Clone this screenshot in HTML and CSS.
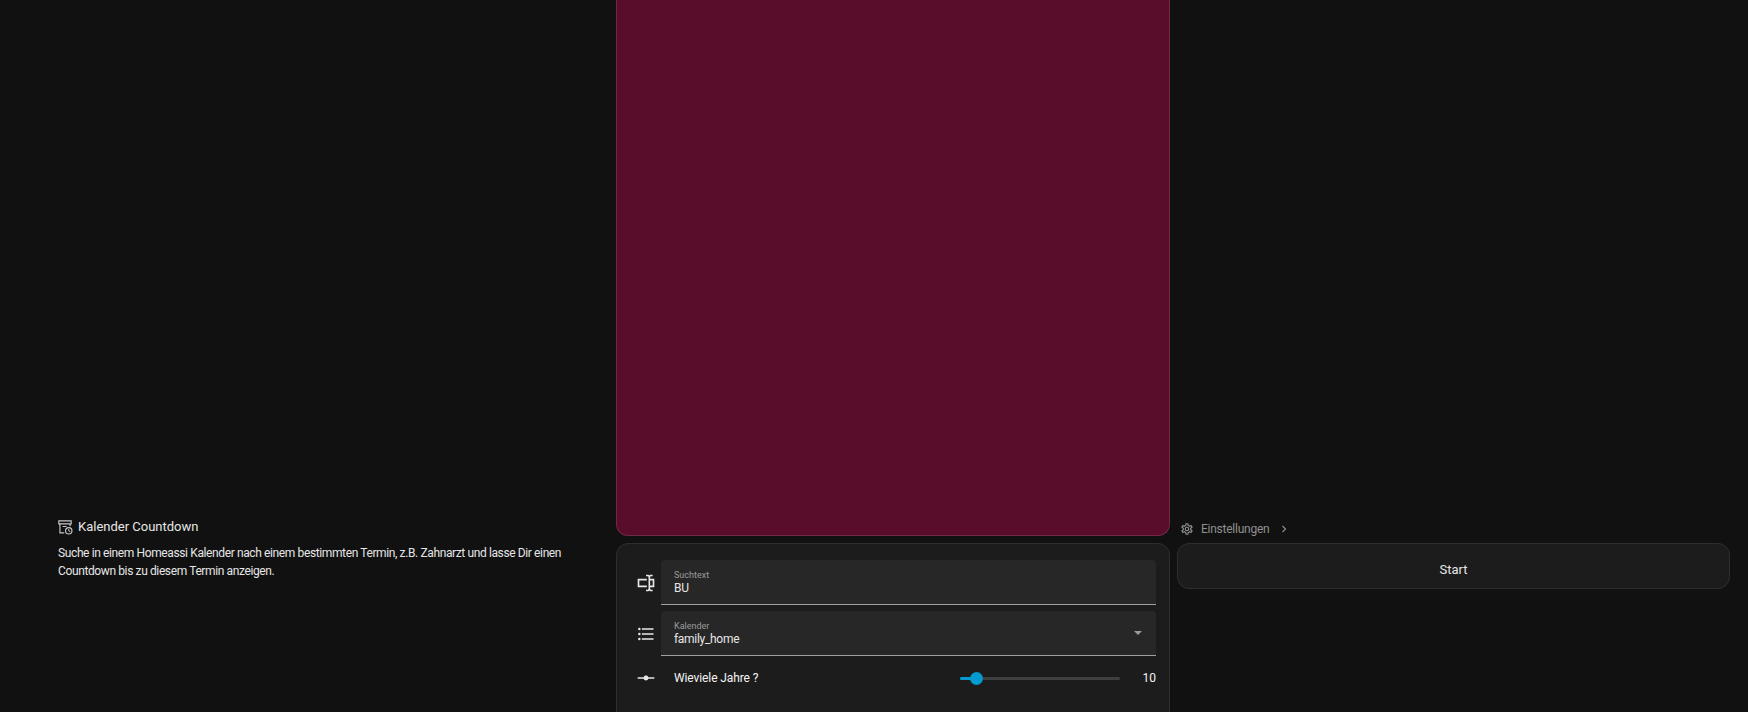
FILE: index.html
```html
<!DOCTYPE html>
<html lang="de">
<head>
    <meta charset="UTF-8">
    <meta name="viewport" content="width=device-width, initial-scale=1.0">
    <title>Kalender Countdown</title>
    <link rel="stylesheet" href="styles.css">
</head>
<body>
    <div class="page">
        <!-- Beschreibung -->
        <div class="info">
            <div class="info-title">
                <svg class="info-icon" viewBox="0 0 24 24"><path d="M3 3H21V8.5H19.5V11H18V8.5H6V19H11V20.5H4.5V8.5H3V3M4.5 4.5V7H19.5V4.5H4.5M9 10.5H14V12H9V10.5Z"/><path d="M17 12A5 5 0 1 1 17 22A5 5 0 0 1 17 12M17 13.5A3.5 3.5 0 1 0 17 20.5A3.5 3.5 0 0 0 17 13.5M16.4 14.5H17.6V16.6L19.3 17.6L18.7 18.6L16.4 17.3V14.5Z"/></svg>
                <span>Kalender Countdown</span>
            </div>
            <p class="info-text">Suche in einem Homeassi Kalender nach einem bestimmten Termin, z.B. Zahnarzt und lasse Dir einen Countdown bis zu diesem Termin anzeigen.</p>
        </div>

        <!-- Vorschau und Formular -->
        <div class="main">
            <div class="preview"></div>
            <div class="card form">
                <div class="form-row">
                    <svg class="row-icon" viewBox="0 0 24 24"><path d="M17,7H22V17H17V19A1,1 0 0,0 18,20H20V22H17.5C16.95,22 16,21.55 16,21C16,21.55 15.05,22 14.5,22H12V20H14A1,1 0 0,0 15,19V5A1,1 0 0,0 14,4H12V2H14.5C15.05,2 16,2.45 16,3C16,2.45 16.95,2 17.5,2H20V4H18A1,1 0 0,0 17,5V7M2,7H13V9H4V15H13V17H2V7M20,15V9H17V15H20Z"/></svg>
                    <div class="field">
                        <span class="field-label">Suchtext</span>
                        <span class="field-value">BU</span>
                    </div>
                </div>
                <div class="form-row">
                    <svg class="row-icon" viewBox="0 0 24 24"><path d="M7,5H21V7H7V5M7,13V11H21V13H7M4,4.5A1.5,1.5 0 0,1 5.5,6A1.5,1.5 0 0,1 4,7.5A1.5,1.5 0 0,1 2.5,6A1.5,1.5 0 0,1 4,4.5M4,10.5A1.5,1.5 0 0,1 5.5,12A1.5,1.5 0 0,1 4,13.5A1.5,1.5 0 0,1 2.5,12A1.5,1.5 0 0,1 4,10.5M7,19V17H21V19H7M4,16.5A1.5,1.5 0 0,1 5.5,18A1.5,1.5 0 0,1 4,19.5A1.5,1.5 0 0,1 2.5,18A1.5,1.5 0 0,1 4,16.5Z"/></svg>
                    <div class="field select">
                        <span class="field-label">Kalender</span>
                        <span class="field-value">family_home</span>
                        <span class="arrow"></span>
                    </div>
                </div>
                <div class="form-row slider-row">
                    <svg class="row-icon" viewBox="0 0 24 24"><path d="M2,11H9.17C9.58,9.83 10.69,9 12,9C13.31,9 14.42,9.83 14.83,11H22V13H14.83C14.42,14.17 13.31,15 12,15C10.69,15 9.58,14.17 9.17,13H2V11Z"/></svg>
                    <span class="slider-label">Wieviele Jahre ?</span>
                    <div class="slider">
                        <div class="slider-fill"></div>
                        <div class="slider-thumb"></div>
                    </div>
                    <span class="slider-value">10</span>
                </div>
            </div>
        </div>

        <!-- Einstellungen und Start -->
        <div class="side">
            <div class="settings">
                <svg class="settings-icon" viewBox="0 0 24 24"><path d="M12,8A4,4 0 0,1 16,12A4,4 0 0,1 12,16A4,4 0 0,1 8,12A4,4 0 0,1 12,8M12,10A2,2 0 0,0 10,12A2,2 0 0,0 12,14A2,2 0 0,0 14,12A2,2 0 0,0 12,10M10,22C9.75,22 9.54,21.82 9.5,21.58L9.13,18.93C8.5,18.68 7.96,18.34 7.44,17.94L4.95,18.95C4.73,19.03 4.46,18.95 4.34,18.73L2.34,15.27C2.21,15.05 2.27,14.78 2.46,14.63L4.57,12.97L4.5,12L4.57,11L2.46,9.37C2.27,9.22 2.21,8.95 2.34,8.73L4.34,5.27C4.46,5.05 4.73,4.96 4.95,5.05L7.44,6.05C7.96,5.66 8.5,5.32 9.13,5.07L9.5,2.42C9.54,2.18 9.75,2 10,2H14C14.25,2 14.46,2.18 14.5,2.42L14.87,5.07C15.5,5.32 16.04,5.66 16.56,6.05L19.05,5.05C19.27,4.96 19.54,5.05 19.66,5.27L21.66,8.73C21.79,8.95 21.73,9.22 21.54,9.37L19.43,11L19.5,12L19.43,13L21.54,14.63C21.73,14.78 21.79,15.05 21.66,15.27L19.66,18.73C19.54,18.95 19.27,19.04 19.05,18.95L16.56,17.95C16.04,18.34 15.5,18.68 14.87,18.93L14.5,21.58C14.46,21.82 14.25,22 14,22H10M11.25,4L10.88,6.61C9.68,6.86 8.62,7.5 7.85,8.39L5.44,7.35L4.69,8.65L6.8,10.2C6.4,11.37 6.4,12.64 6.8,13.8L4.68,15.36L5.43,16.66L7.86,15.62C8.63,16.5 9.68,17.14 10.87,17.38L11.24,20H12.76L13.13,17.39C14.32,17.14 15.37,16.5 16.14,15.62L18.57,16.66L19.32,15.36L17.2,13.81C17.6,12.64 17.6,11.37 17.2,10.2L19.31,8.65L18.56,7.35L16.15,8.39C15.38,7.5 14.32,6.86 13.12,6.62L12.75,4H11.25Z"/></svg>
                <span>Einstellungen</span>
                <svg class="settings-chevron" viewBox="0 0 24 24"><path d="M8.59,16.58L13.17,12L8.59,7.41L10,6L16,12L10,18L8.59,16.58Z"/></svg>
            </div>
            <div class="card start">Start</div>
        </div>
    </div>
</body>
</html>
```

FILE: styles.css
```css
html, body {
    margin: 0;
    height: 712px;
    overflow: hidden;
}
body {
    font-family: Roboto, sans-serif;
    background-color: #111111;
    color: #e6e6e6;
}
.page {
    display: grid;
    grid-template-columns: 616px 554px 562px;
    height: 712px;
}
.info {
    padding: 518px 40px 0 58px;
}
.info-title {
    display: flex;
    align-items: center;
    gap: 4px;
    font-size: 13px;
    line-height: 18px;
    margin-left: -2px;
}
.info-icon {
    width: 18px;
    height: 18px;
    fill: #c8c8c8;
}
.info-text {
    margin: 8px 0 0;
    font-size: 12px;
    line-height: 18px;
    letter-spacing: -0.38px;
}
.main {
    display: flex;
    flex-direction: column;
    gap: 7px;
}
.preview {
    height: 535px;
    flex-shrink: 0;
    background-color: #5a0d2b;
    border: 1px solid #6f2a45;
    border-top: none;
    border-radius: 0 0 12px 12px;
}
.card {
    background-color: #1c1c1c;
    border: 1px solid #2e2e2e;
    border-radius: 12px;
}
.form {
    padding: 16px 13px 40px 13px;
    display: flex;
    flex-direction: column;
    gap: 6px;
    flex-grow: 1;
}
.form-row {
    display: flex;
    align-items: center;
}
.row-icon {
    width: 20px;
    height: 20px;
    fill: #e6e6e6;
    flex-shrink: 0;
    padding: 0 5px 0 6px;
}
.field {
    position: relative;
    flex-grow: 1;
    height: 44px;
    padding: 0 13px;
    background-color: #272727;
    border-bottom: 1px solid #a0a0a0;
    border-radius: 4px 4px 0 0;
    display: flex;
    flex-direction: column;
    justify-content: center;
}
.field-label {
    font-size: 9px;
    line-height: 11px;
    margin-top: 2px;
    color: #9b9b9b;
}
.field-value {
    font-size: 12px;
    line-height: 15px;
    letter-spacing: -0.3px;
}
.arrow {
    position: absolute;
    right: 14px;
    top: 20px;
    border-left: 4px solid transparent;
    border-right: 4px solid transparent;
    border-top: 4px solid #9b9b9b;
}
.slider-row {
    height: 32px;
}
.slider-label {
    flex-grow: 1;
    padding-left: 13px;
    font-size: 12px;
    letter-spacing: -0.1px;
    color: #f4f4f4;
}
.slider {
    position: relative;
    width: 160px;
    height: 3px;
    background-color: #3f3f3f;
    border-radius: 2px;
}
.slider-fill {
    width: 17px;
    height: 3px;
    background-color: #039bd0;
    border-radius: 2px;
}
.slider-thumb {
    position: absolute;
    left: 10px;
    top: -5px;
    width: 13px;
    height: 13px;
    border-radius: 50%;
    background-color: #039bd0;
}
.slider-value {
    width: 36px;
    text-align: right;
    font-size: 12px;
    color: #f4f4f4;
}
.side {
    display: flex;
    flex-direction: column;
    padding: 516px 2px 0 7px;
}
.settings {
    display: flex;
    align-items: center;
    height: 26px;
    margin-bottom: 1px;
    padding-left: 3px;
    gap: 7px;
    font-size: 12px;
    letter-spacing: -0.25px;
    color: #8f8f8f;
}
.settings-icon {
    width: 14px;
    height: 14px;
    fill: #8f8f8f;
}
.settings-chevron {
    width: 14px;
    height: 14px;
    fill: #8f8f8f;
    margin-left: 1px;
}
.start {
    height: 40px;
    padding-top: 4px;
    line-height: 44px;
    text-align: center;
    font-size: 13px;
}
```
